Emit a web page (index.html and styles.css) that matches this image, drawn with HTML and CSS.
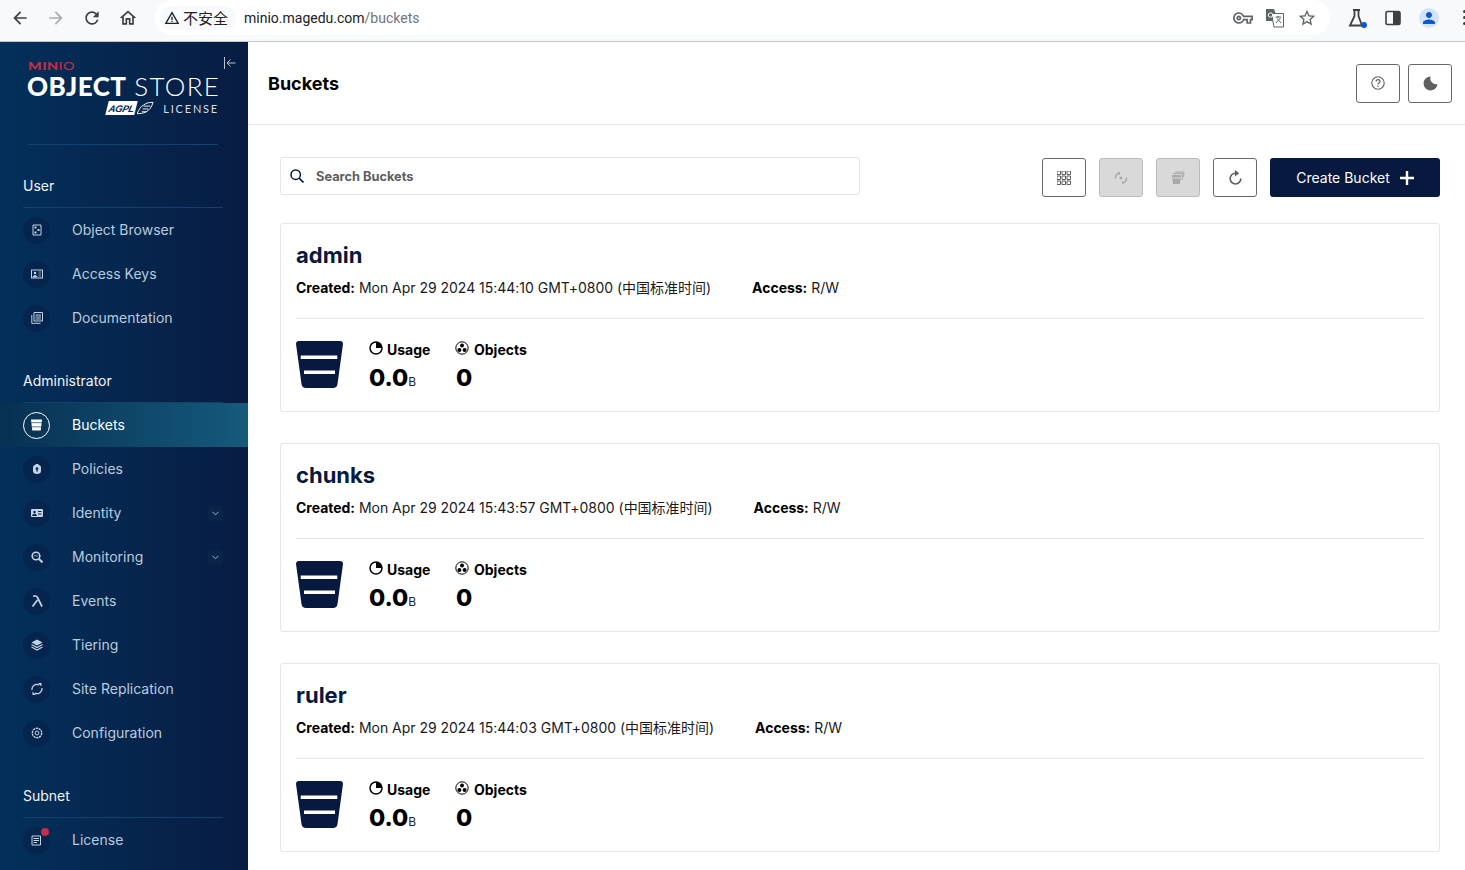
FILE: index.html
```html
<!DOCTYPE html>
<html lang="zh">
<head>
    <meta charset="UTF-8">
    <title>MinIO Console</title>
    <link rel="stylesheet" href="styles.css">
</head>
<body>
    <svg class="defs" width="0" height="0">
        <symbol id="bucket" viewBox="0 0 47 47">
            <path d="M3 0H44Q47 0 47 3L41.500 43Q41 47 37 47H10Q6 47 5.500 43L0 3Q0 0 3 0Z"/>
            <rect x="4.700" y="14.500" width="36.600" height="3.500" fill="#fff"/>
            <rect x="8" y="29.500" width="31" height="3.500" fill="#fff"/>
        </symbol>
        <symbol id="usage" viewBox="0 0 14 14">
            <circle cx="7" cy="7" r="6" fill="none" stroke="currentColor" stroke-width="1.500"/>
            <path d="M7 7V1A6 6 0 0 1 13 7Z" fill="currentColor"/>
        </symbol>
        <symbol id="objects" viewBox="0 0 14 14">
            <circle cx="7" cy="7" r="6.200" fill="none" stroke="currentColor" stroke-width="1"/>
            <circle cx="7" cy="4.500" r="2" fill="currentColor"/>
            <circle cx="4.400" cy="9" r="2" fill="currentColor"/>
            <circle cx="9.600" cy="9" r="2" fill="currentColor"/>
        </symbol>
    </svg>

    <header class="browser-bar">
        <svg class="nav-icon" viewBox="0 0 24 24"><path d="M20 11H7.830l5.590-5.590L12 4l-8 8 8 8 1.410-1.410L7.830 13H20v-2z"/></svg>
        <svg class="nav-icon muted" viewBox="0 0 24 24"><path d="M4 11h12.170l-5.590-5.590L12 4l8 8-8 8-1.410-1.410L16.170 13H4v-2z"/></svg>
        <svg class="nav-icon" viewBox="0 0 24 24"><path d="M17.650 6.350A7.958 7.958 0 0 0 12 4c-4.420 0-7.990 3.580-7.990 8s3.570 8 7.990 8c3.730 0 6.840-2.550 7.730-6h-2.080A5.990 5.990 0 0 1 12 18c-3.310 0-6-2.690-6-6s2.690-6 6-6c1.660 0 3.140.690 4.220 1.780L13 11h7V4l-2.350 2.350z"/></svg>
        <svg class="nav-icon" viewBox="0 0 24 24"><path d="M12 5.690l5 4.500V18h-2v-6H9v6H7v-7.810l5-4.500M12 3L2 12h3v8h6v-6h2v6h6v-8h3L12 3z"/></svg>
        <div class="omnibox">
            <div class="security-chip">
                <svg viewBox="0 0 24 24"><path d="M1 21h22L12 2 1 21zm3.470-2L12 6l7.530 13H4.470zM11 16h2v2h-2zM11 10h2v5h-2z"/></svg>
                <span>不安全</span>
            </div>
            <div class="url">minio.magedu.com<span>/buckets</span></div>
            <div class="omni-icons">
                <svg viewBox="0 0 24 24"><path d="M22 19h-6v-4h-2.680c-1.140 2.420-3.600 4-6.320 4-3.860 0-7-3.140-7-7s3.140-7 7-7c2.720 0 5.170 1.580 6.320 4H24v6h-2v4zm-4-2h2v-4h2v-2H11.940l-.23-.67C11.010 8.340 9.110 7 7 7c-2.760 0-5 2.240-5 5s2.240 5 5 5c2.110 0 4.010-1.340 4.710-3.330l.23-.67H18v4zM7 15c-1.650 0-3-1.350-3-3s1.350-3 3-3 3 1.350 3 3-1.350 3-3 3zm0-4c-.55 0-1 .45-1 1s.45 1 1 1 1-.45 1-1-.45-1-1-1z"/></svg>
                <svg viewBox="0 0 20 20"><path d="M1 1H9L10.500 5V13H1Z"/><path d="M6.500 5.500H18.500V19H9Z" fill="#fff" stroke="#5f6368"/><circle cx="5.500" cy="7" r="2.200" fill="none" stroke="#fff"/><path d="M10.500 9H16M13 8V10M11 15L15.500 10M12 10.500L16 15" fill="none" stroke="#5f6368"/></svg>
                <svg viewBox="0 0 24 24"><path d="M22 9.240l-7.190-.62L12 2 9.190 8.630 2 9.240l5.460 4.730L5.820 21 12 17.270 18.180 21l-1.630-7.030L22 9.240zM12 15.400l-3.760 2.270 1-4.280-3.320-2.880 4.380-.38L12 6.100l1.710 4.040 4.380.38-3.320 2.880 1 4.280L12 15.400z"/></svg>
            </div>
        </div>
        <div class="browser-tools">
            <div class="flask">
                <svg viewBox="0 0 20 20"><path d="M6 2H13M7.500 2V8L3 17.500H15L11.500 8V2" fill="none" stroke="#3c4043" stroke-width="1.800"/></svg>
                <span class="flask-dot"></span>
            </div>
            <svg class="side-panel" viewBox="0 0 16 16"><rect x="1" y="1.500" width="14" height="13" rx="1.500" fill="none" stroke="#3c4043" stroke-width="1.600"/><rect x="8" y="1.500" width="7" height="13" fill="#3c4043"/></svg>
            <div class="avatar"><svg viewBox="0 0 24 24"><path d="M12 12c2.210 0 4-1.790 4-4s-1.790-4-4-4-4 1.790-4 4 1.790 4 4 4zm0 2c-2.670 0-8 1.340-8 4v2h16v-2c0-2.660-5.330-4-8-4z"/></svg></div>
            <div class="kebab"><i></i><i></i><i></i></div>
        </div>
    </header>

    <div class="app">
        <aside class="sidebar">
            <div class="brand">
                <svg class="collapse" viewBox="0 0 12 12"><path d="M.500 0V12M11.500 6H3M6.500 2.500L3 6l3.500 3.500" fill="none" stroke="#b9c6d6"/></svg>
                <div class="brand-minio">MIN<span>IO</span></div>
                <div class="brand-title"><b>OBJECT</b> <span>STORE</span></div>
                <div class="brand-license">
                    <span class="agpl"><em>AGPL</em></span>
                    <svg class="agpl-wing" viewBox="0 0 18 14"><path d="M0 13C6 13 14 12 17 1C12 1 9 2 7 4C4 5 2 9 0 13ZM6 8H12M7 5H14M5 11H10" fill="none" stroke="#fff"/></svg>
                    <span class="license-text">LICENSE</span>
                </div>
            </div>

            <nav class="nav-group">
                <div class="nav-title">User</div>
                <a class="nav-item">
                    <span class="nav-icon-wrap"><svg viewBox="0 0 12 12"><path d="M2 1H10V11H2Z" fill="none" stroke="#c5d3e2"/><rect x="3.500" y="2.500" width="2" height="2" fill="#c5d3e2"/><rect x="6.500" y="5" width="2" height="2" fill="#c5d3e2"/><rect x="3.500" y="7.500" width="2" height="2" fill="#c5d3e2"/></svg></span>
                    <span>Object Browser</span>
                </a>
                <a class="nav-item">
                    <span class="nav-icon-wrap"><svg viewBox="0 0 12 12"><rect x=".500" y="2" width="11" height="8" fill="none" stroke="#c5d3e2"/><circle cx="4" cy="5" r="1.300" fill="#c5d3e2"/><path d="M2 9C2 7 6 7 6 9ZM7.500 4H10M7.500 6H10M7.500 8H10" fill="#c5d3e2" stroke="#c5d3e2" stroke-width=".7"/></svg></span>
                    <span>Access Keys</span>
                </a>
                <a class="nav-item">
                    <span class="nav-icon-wrap"><svg viewBox="0 0 12 12"><path d="M3 .500H11.500V9H3ZM.800 3V11.300H9.500" fill="none" stroke="#c5d3e2"/><path d="M4.500 3H10M4.500 5H10M4.500 7H10" stroke="#c5d3e2"/></svg></span>
                    <span>Documentation</span>
                </a>
            </nav>

            <nav class="nav-group">
                <div class="nav-title">Administrator</div>
                <a class="nav-item active">
                    <span class="nav-icon-wrap"><svg viewBox="0 0 14 12"><path d="M1 0H13L11.500 12H2.500Z" fill="#fff"/><path d="M1 3.500H13M1.500 8H12.500" stroke="#1a5073" stroke-width=".8"/></svg></span>
                    <span>Buckets</span>
                </a>
                <a class="nav-item">
                    <span class="nav-icon-wrap"><svg viewBox="0 0 12 12"><path d="M4.500 2V1H7.500V2C9 2 10 3 10 4.500V8C10 10 8.500 11 6 11S2 10 2 8V4.500C2 3 3 2 4.500 2Z" fill="#c5d3e2"/><circle cx="6" cy="5.500" r="1.300" fill="#05254e"/><rect x="5.300" y="6" width="1.400" height="2.500" fill="#05254e"/></svg></span>
                    <span>Policies</span>
                </a>
                <a class="nav-item">
                    <span class="nav-icon-wrap"><svg viewBox="0 0 12 12"><rect x="0" y="2" width="12" height="8" rx="1" fill="#c5d3e2"/><circle cx="3.500" cy="5" r="1.200" fill="#05254e"/><path d="M1.500 8.500C1.500 6.800 5.500 6.800 5.500 8.500ZM7 4.500H10.500M7 7H10.500" fill="#05254e" stroke="#05254e"/></svg></span>
                    <span>Identity</span>
                    <span class="nav-chevron"><svg viewBox="0 0 8 5"><path d="M.500 .500L4 4l3.500-3.500" fill="none" stroke="#b9c6d6"/></svg></span>
                </a>
                <a class="nav-item">
                    <span class="nav-icon-wrap"><svg viewBox="0 0 12 12"><circle cx="5" cy="5" r="3.800" fill="none" stroke="#c5d3e2" stroke-width="1.600"/><path d="M8 8L11.500 11.500" stroke="#c5d3e2" stroke-width="2"/><path d="M3 5.500L4.500 4L6 5.500L7 4.500" fill="none" stroke="#c5d3e2" stroke-width=".8"/></svg></span>
                    <span>Monitoring</span>
                    <span class="nav-chevron"><svg viewBox="0 0 8 5"><path d="M.500 .500L4 4l3.500-3.500" fill="none" stroke="#b9c6d6"/></svg></span>
                </a>
                <a class="nav-item">
                    <span class="nav-icon-wrap"><svg viewBox="0 0 12 12"><path d="M2 1H4.500C5.500 1 6 1.500 6.500 2.500L11 11.500M6.500 5L1.500 11.500" fill="none" stroke="#c5d3e2" stroke-width="1.700"/></svg></span>
                    <span>Events</span>
                </a>
                <a class="nav-item">
                    <span class="nav-icon-wrap"><svg viewBox="0 0 12 12"><path d="M6 .500L11.500 3.500L6 6.500L.500 3.500Z" fill="#c5d3e2"/><path d="M.500 5.500L6 8.500L11.500 5.500M.500 8L6 11L11.500 8" fill="none" stroke="#c5d3e2" stroke-width="1.100"/></svg></span>
                    <span>Tiering</span>
                </a>
                <a class="nav-item">
                    <span class="nav-icon-wrap"><svg viewBox="0 0 12 12"><path d="M1 7A5 5 0 0 1 8 1.800M11 5A5 5 0 0 1 4 10.200" fill="none" stroke="#c5d3e2" stroke-width="1.300"/><path d="M7 .000H10.500V3.500ZM5 12H1.500V8.500Z" fill="#c5d3e2"/></svg></span>
                    <span>Site Replication</span>
                </a>
                <a class="nav-item">
                    <span class="nav-icon-wrap"><svg viewBox="0 0 12 12"><circle cx="6" cy="6" r="4.700" fill="none" stroke="#c5d3e2" stroke-width="1.400" stroke-dasharray="2.200 .7"/><circle cx="6" cy="6" r="1.900" fill="none" stroke="#c5d3e2"/></svg></span>
                    <span>Configuration</span>
                </a>
            </nav>

            <nav class="nav-group">
                <div class="nav-title">Subnet</div>
                <a class="nav-item">
                    <span class="nav-icon-wrap"><svg viewBox="0 0 12 12"><path d="M1 2H9.500V11H1Z" fill="none" stroke="#c5d3e2"/><path d="M2.500 4.500H8M2.500 6.500H8M2.500 8.500H6" stroke="#c5d3e2"/></svg><i class="badge"></i></span>
                    <span>License</span>
                </a>
            </nav>
        </aside>

        <main class="main">
            <div class="page-header">
                <h1>Buckets</h1>
                <div class="header-actions">
                    <button class="icon-btn"><svg viewBox="0 0 14 14"><circle cx="7" cy="7" r="6.200" fill="none" stroke="#5f5f5f" stroke-width="1.100"/><path d="M5 5.500C5 3 9 3 9 5.500C9 7 7 7 7 8.500" fill="none" stroke="#5f5f5f" stroke-width="1.200"/><circle cx="7" cy="10.300" r=".8" fill="#5f5f5f"/></svg></button>
                    <button class="icon-btn"><svg class="moon" viewBox="0 0 14 14"><path d="M7 .500A6.500 6.500 0 1 0 13.500 7.500A5.500 5.500 0 0 1 7 .500Z" fill="#5f5f5f"/></svg></button>
                </div>
            </div>

            <div class="content">
                <div class="toolbar">
                    <label class="search">
                        <svg viewBox="0 0 14 14"><circle cx="5.700" cy="5.700" r="4.700" fill="none" stroke="#07193e" stroke-width="1.500"/><path d="M9 9L13.500 13.500" stroke="#07193e" stroke-width="1.700"/></svg>
                        <span>Search Buckets</span>
                    </label>
                    <div class="toolbar-actions">
                        <button class="icon-btn"><svg class="grid-icon" viewBox="0 0 14 14"><path d="M0 0h3.500v3.500H0zM5 0h3.500v3.500H5zM10 0h3.500v3.500H10zM0 5h3.500v3.500H0zM5 5h3.500v3.500H5zM10 5h3.500v3.500H10zM0 10h3.500v3.500H0zM5 10h3.500v3.500H5zM10 10h3.500v3.500H10z" fill="none" stroke="#5f5f5f"/></svg></button>
                        <button class="icon-btn disabled"><svg viewBox="0 0 14 14"><path d="M1.500 7.500A5.500 5.500 0 0 1 5 2M12.500 6.500A5.500 5.500 0 0 1 9 12" fill="none" stroke="#a9a9a9" stroke-width="1.400"/><path d="M6 .500V4L3.500 2.500ZM8 13.500V10L10.500 11.500Z" fill="#a9a9a9"/><circle cx="7" cy="7" r="1.500" fill="#a9a9a9"/></svg></button>
                        <button class="icon-btn disabled"><svg viewBox="0 0 14 14"><path d="M1 4H10L9 13H2Z" fill="#a9a9a9"/><path d="M2 2.500H11.500L11 9M4 1H13L12.500 6" fill="none" stroke="#a9a9a9"/><path d="M1.500 7H9.500" stroke="#ddd"/></svg></button>
                        <button class="icon-btn"><svg class="reload" viewBox="0 0 14 14"><path d="M7 3A5 5 0 1 0 12 8" fill="none" stroke="#5f5f5f" stroke-width="1.500"/><path d="M6.500 0V6L10.500 3Z" fill="#5f5f5f"/></svg></button>
                        <button class="create-btn">Create Bucket
                            <svg viewBox="0 0 14 14"><path d="M7 0V14M0 7H14" stroke="#fff" stroke-width="2.400"/></svg>
                        </button>
                    </div>
                </div>

                <section class="bucket-card">
                    <h3>admin</h3>
                    <div class="bucket-meta">
                        <div><b>Created:</b> Mon Apr 29 2024 15:44:10 GMT+0800 (中国标准时间)</div>
                        <div><b>Access:</b> R/W</div>
                    </div>
                    <div class="bucket-stats">
                        <svg class="bucket-icon"><use href="#bucket"/></svg>
                        <div class="stat stat-usage">
                            <div class="stat-label"><svg><use href="#usage"/></svg>Usage</div>
                            <div class="stat-value">0.0<small>B</small></div>
                        </div>
                        <div class="stat stat-objects">
                            <div class="stat-label"><svg><use href="#objects"/></svg>Objects</div>
                            <div class="stat-value">0</div>
                        </div>
                    </div>
                </section>

                <section class="bucket-card">
                    <h3>chunks</h3>
                    <div class="bucket-meta">
                        <div><b>Created:</b> Mon Apr 29 2024 15:43:57 GMT+0800 (中国标准时间)</div>
                        <div><b>Access:</b> R/W</div>
                    </div>
                    <div class="bucket-stats">
                        <svg class="bucket-icon"><use href="#bucket"/></svg>
                        <div class="stat stat-usage">
                            <div class="stat-label"><svg><use href="#usage"/></svg>Usage</div>
                            <div class="stat-value">0.0<small>B</small></div>
                        </div>
                        <div class="stat stat-objects">
                            <div class="stat-label"><svg><use href="#objects"/></svg>Objects</div>
                            <div class="stat-value">0</div>
                        </div>
                    </div>
                </section>

                <section class="bucket-card">
                    <h3>ruler</h3>
                    <div class="bucket-meta">
                        <div><b>Created:</b> Mon Apr 29 2024 15:44:03 GMT+0800 (中国标准时间)</div>
                        <div><b>Access:</b> R/W</div>
                    </div>
                    <div class="bucket-stats">
                        <svg class="bucket-icon"><use href="#bucket"/></svg>
                        <div class="stat stat-usage">
                            <div class="stat-label"><svg><use href="#usage"/></svg>Usage</div>
                            <div class="stat-value">0.0<small>B</small></div>
                        </div>
                        <div class="stat stat-objects">
                            <div class="stat-label"><svg><use href="#objects"/></svg>Objects</div>
                            <div class="stat-value">0</div>
                        </div>
                    </div>
                </section>
            </div>
        </main>
    </div>
</body>
</html>
```

FILE: styles.css
```css
:root {
    --navy: #07193e;
    --line: #e5e5e5;
    --btn-line: #696969;
    --nav-text: #b9cbdd;
}

* {
    margin: 0;
    padding: 0;
    box-sizing: border-box;
}

html,
body {
    height: 870px;
    overflow: hidden;
}

body {
    font-family: Inter, "Noto Sans CJK SC", sans-serif;
    color: #000;
    background: #fff;
}

.defs {
    position: absolute;
}

/* browser chrome */
.browser-bar {
    display: flex;
    align-items: center;
    height: 42px;
    padding: 0 0 6px 10px;
    background: #f8f9fa;
    border-bottom: 1px solid #c7c7c7;
}

.nav-icon {
    flex: 0 0 20px;
    width: 20px;
    height: 20px;
    margin-right: 16px;
    fill: #3c4043;
}

.nav-icon.muted {
    fill: #a9abae;
}

.omnibox {
    display: flex;
    align-items: center;
    flex: 0 0 1175px;
    height: 35px;
    margin-left: 1px;
    padding: 0 13px 0 5px;
    background: #fff;
    border-radius: 17px;
}

.security-chip {
    display: flex;
    align-items: center;
    gap: 3px;
    height: 24px;
    padding: 0 8px 0 4px;
    margin-right: 8px;
    font-size: 15px;
    color: #202124;
    background: #f8f9fa;
    border-radius: 12px;
}

.security-chip svg {
    width: 16px;
    height: 16px;
    fill: #202124;
}

.url {
    flex: 1;
    padding-top: 1px;
    font-family: Roboto, sans-serif;
    font-size: 14px;
    color: #202124;
}

.url span {
    color: #70757a;
}

.omni-icons {
    display: flex;
    align-items: center;
    gap: 12px;
}

.omni-icons svg {
    width: 20px;
    height: 20px;
    fill: #5f6368;
}

.browser-tools {
    display: flex;
    align-items: center;
    gap: 18px;
    margin-left: 17px;
}

.flask {
    position: relative;
    flex: 0 0 20px;
    height: 20px;
}

.flask svg {
    width: 20px;
    height: 20px;
}

.flask-dot {
    position: absolute;
    right: 0;
    bottom: 0;
    width: 6px;
    height: 6px;
    background: #0b57d0;
    border-radius: 50%;
}

.side-panel {
    flex: 0 0 16px;
    height: 16px;
}

.avatar {
    display: flex;
    align-items: center;
    justify-content: center;
    flex: 0 0 20px;
    height: 20px;
    background: #d3e3fd;
    border-radius: 50%;
}

.avatar svg {
    width: 18px;
    height: 18px;
    fill: #0b57d0;
}

.kebab {
    display: flex;
    flex-direction: column;
    gap: 3px;
    margin-left: 6px;
}

.kebab i {
    display: block;
    width: 3px;
    height: 3px;
    background: #3c4043;
    border-radius: 50%;
}

/* app layout */
.app {
    display: flex;
    height: 828px;
}

.sidebar {
    flex: 0 0 248px;
    overflow: hidden;
    color: #fff;
    background: linear-gradient(90deg, #03305a 0%, #081c42 100%);
}

.brand {
    position: relative;
    height: 103px;
    margin: 0 30px 0 28px;
    padding-top: 18px;
    border-bottom: 1px solid #12426f;
}

.collapse {
    position: absolute;
    top: 15px;
    right: -18px;
    width: 12px;
    height: 12px;
}

.brand-minio {
    font-family: Lato, sans-serif;
    font-size: 11px;
    font-weight: 900;
    line-height: 11px;
    letter-spacing: .4px;
    color: #c72c48;
    transform: scaleX(1.300);
    transform-origin: left;
}

.brand-minio span {
    font-weight: 400;
}

.brand-title {
    margin-top: 1px;
    margin-left: -1px;
    font-family: Lato, sans-serif;
    font-size: 26px;
    font-weight: 300;
    line-height: 28px;
    white-space: nowrap;
    letter-spacing: .9px;
}

.brand-title b {
    font-weight: 900;
    letter-spacing: .4px;
}

.brand-title span {
    letter-spacing: 1.300px;
}

.brand-license {
    display: flex;
    justify-content: flex-end;
    align-items: center;
    height: 16px;
    font-family: Lato, sans-serif;
    color: #d6dde6;
}

.agpl {
    display: flex;
    align-items: center;
    height: 14px;
    padding: 0 2px;
    font-family: "Liberation Sans", sans-serif;
    font-size: 9.500px;
    font-weight: 700;
    letter-spacing: -.3px;
    color: #062a50;
    background: #fff;
    transform: skewX(-14deg);
}

.agpl-wing {
    width: 17px;
    height: 14px;
    margin-left: 1px;
}

.license-text {
    margin-left: 9px;
    margin-right: -1px;
    font-size: 11px;
    letter-spacing: 1.800px;
}

.nav-group {
    margin-top: 28px;
}

.nav-title {
    height: 35px;
    margin: 0 25px 0 23px;
    padding-top: 3px;
    font-size: 14px;
    line-height: 20px;
    color: #f2f5f8;
    border-bottom: 1px solid #14406a;
}

.nav-item {
    display: flex;
    align-items: center;
    height: 44px;
    padding: 0 25px 0 23px;
    font-size: 14px;
    color: var(--nav-text);
}

.nav-item > span:nth-child(2) {
    padding-bottom: 2px;
}

.nav-icon-wrap {
    position: relative;
    display: flex;
    align-items: center;
    justify-content: center;
    flex: 0 0 27px;
    height: 27px;
    margin-right: 22px;
    background: #05254e;
    border-radius: 50%;
}

.nav-icon-wrap svg {
    width: 12px;
    height: 12px;
}

.nav-item.active {
    color: #fff;
    background: linear-gradient(90deg, #073052 0%, #155a7c 100%);
}

.nav-item.active .nav-icon-wrap {
    background: transparent;
    border: 1px solid #fff;
}

.nav-item.active .nav-icon-wrap svg {
    width: 13px;
}

.nav-chevron {
    display: flex;
    align-items: center;
    justify-content: center;
    width: 15px;
    height: 15px;
    margin-left: auto;
    background: #0a2348;
    border-radius: 2px;
}

.nav-chevron svg {
    width: 7px;
    height: 5px;
}

.badge {
    position: absolute;
    top: 1px;
    right: 1px;
    width: 8px;
    height: 8px;
    background: #c72c48;
    border-radius: 50%;
}

/* main content */
.main {
    flex: 1;
    min-width: 0;
    overflow: hidden;
}

.page-header {
    display: flex;
    align-items: center;
    justify-content: space-between;
    height: 83px;
    padding: 0 13px 0 20px;
    border-bottom: 1px solid var(--line);
}

.page-header h1 {
    font-size: 18px;
    font-weight: 700;
}

.header-actions {
    display: flex;
    gap: 8px;
}

.icon-btn {
    display: flex;
    align-items: center;
    justify-content: center;
    width: 44px;
    height: 39px;
    background: #fff;
    border: 1px solid var(--btn-line);
    border-radius: 3px;
}

.icon-btn svg {
    width: 14px;
    height: 14px;
}

.icon-btn svg.moon {
    width: 15px;
    height: 15px;
}

.icon-btn svg.reload {
    width: 15px;
    height: 15px;
}

.icon-btn.disabled {
    background: #d9d9d9;
    border-color: #bbb;
}

.content {
    padding: 33px 25px 0 32px;
}

.toolbar {
    display: flex;
    align-items: flex-start;
    justify-content: space-between;
    margin-bottom: 26px;
}

.search {
    display: flex;
    align-items: center;
    gap: 12px;
    width: 580px;
    height: 38px;
    margin-top: -1px;
    padding-left: 9px;
    font-size: 12.800px;
    font-weight: 700;
    color: #5e5e5e;
    border: 1px solid var(--line);
    border-radius: 3px;
}

.search svg {
    width: 14px;
    height: 14px;
}

.toolbar-actions {
    display: flex;
    gap: 13px;
}

.create-btn {
    display: flex;
    align-items: center;
    justify-content: center;
    gap: 10px;
    width: 170px;
    height: 39px;
    font-family: inherit;
    font-size: 14px;
    color: #fff;
    background: var(--navy);
    border: none;
    border-radius: 3px;
}

.create-btn svg {
    width: 14px;
    height: 14px;
}

.bucket-card {
    height: 189px;
    margin-bottom: 31px;
    padding: 15px 15px 0;
    border: 1px solid var(--line);
    border-radius: 3px;
}

.bucket-card h3 {
    height: 32px;
    font-size: 22px;
    font-weight: 700;
    line-height: 32px;
    color: var(--navy);
}

.bucket-meta {
    display: flex;
    gap: 41px;
    height: 48px;
    padding-top: 6px;
    font-size: 14px;
    line-height: 22px;
    letter-spacing: -.02px;
    color: #1a1a1a;
    border-bottom: 1px solid var(--line);
}

.bucket-meta b {
    font-weight: 700;
    color: #000;
}

.bucket-stats {
    display: flex;
    padding-top: 22px;
}

.bucket-icon {
    width: 47px;
    height: 47px;
    margin-right: 26px;
    fill: var(--navy);
}

.stat {
    margin-top: -2px;
}

.stat-usage {
    width: 86px;
}

.stat-objects .stat-label {
    gap: 5px;
}

.stat-objects .stat-value {
    padding-left: 1px;
}

.stat-label {
    display: flex;
    align-items: center;
    gap: 4px;
    height: 21px;
    font-size: 14px;
    font-weight: 700;
}

.stat-label svg {
    width: 14px;
    height: 14px;
    margin-top: -3px;
}

.stat-value {
    font-size: 23.500px;
    font-weight: 800;
    line-height: 36px;
}

.stat-value small {
    font-size: 12px;
    font-weight: 400;
    color: #222;
}
```
